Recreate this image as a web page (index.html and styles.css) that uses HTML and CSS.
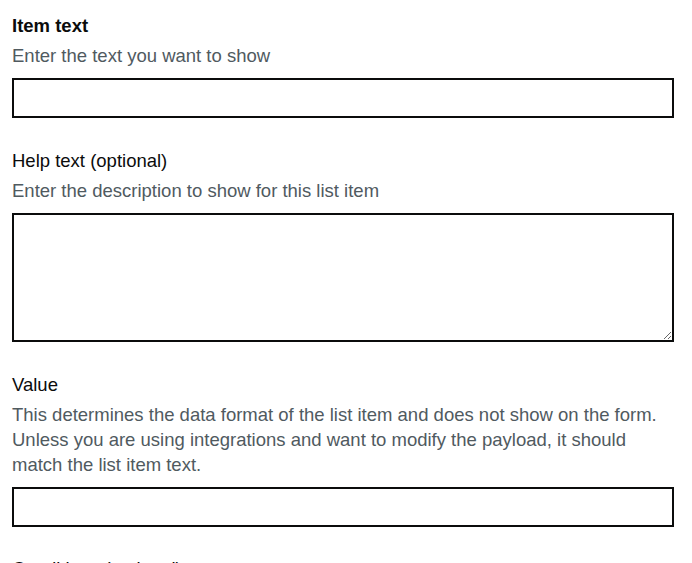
FILE: index.html
```html
<!DOCTYPE html>
<html lang="en">
<head>
<meta charset="utf-8">
<title>List item</title>
<link rel="stylesheet" href="styles.css">
</head>
<body>
<main class="page">
  <div class="form-group">
    <label class="label label--bold" for="item-text">Item text</label>
    <div class="hint">Enter the text you want to show</div>
    <input class="input" id="item-text" type="text">
  </div>
  <div class="form-group">
    <label class="label" for="help-text">Help text (optional)</label>
    <div class="hint">Enter the description to show for this list item</div>
    <textarea class="textarea" id="help-text" rows="5"></textarea>
  </div>
  <div class="form-group">
    <label class="label" for="value">Value</label>
    <div class="hint">This determines the data format of the list item and does not show on the form. Unless you are using integrations and want to modify the payload, it should match the list item text.</div>
    <input class="input" id="value" type="text">
  </div>
  <div class="form-group form-group--partial">
    <label class="label" for="conditions">Conditions (optional)</label>
  </div>
</main>
</body>
</html>
```
FILE: styles.css
```css
html, body {
  margin: 0;
  padding: 0;
  background: #ffffff;
}

body {
  font-family: "Liberation Sans", Arial, sans-serif;
  font-size: 18.5px;
  line-height: 25px;
  color: #0b0c0c;
}

.page {
  width: 662px;
  padding: 13px 0 0 12px;
  display: flex;
  flex-direction: column;
}

.form-group {
  display: flex;
  flex-direction: column;
  margin-bottom: 30px;
}

.form-group--partial {
  margin-top: -1px;
}

.label {
  display: block;
  font-weight: 400;
  margin-bottom: 5px;
}

.label--bold {
  font-weight: 700;
}

.hint {
  color: #505a5f;
  margin-bottom: 10px;
}

.input,
.textarea {
  box-sizing: border-box;
  width: 100%;
  margin: 0;
  padding: 5px;
  border: 2px solid #0b0c0c;
  border-radius: 0;
  background: #ffffff;
  font: inherit;
  color: #0b0c0c;
  outline: none;
}

.input {
  height: 40px;
}

.textarea {
  display: block;
  height: 129px;
  resize: vertical;
}
```
